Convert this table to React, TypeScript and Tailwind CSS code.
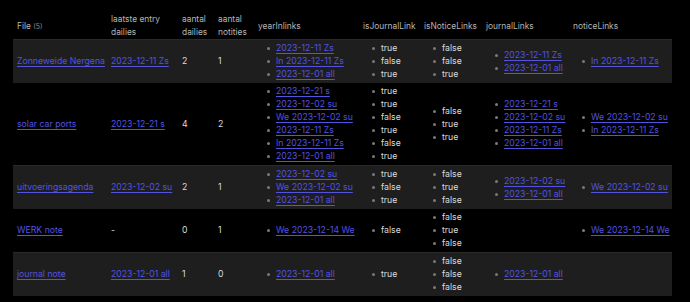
const rows = [
  {
    file: "Zonneweide Nergena",
    last: "2023-12-11 Zs",
    dailies: "2",
    notities: "1",
    year: ["2023-12-11 Zs", "In 2023-12-11 Zs", "2023-12-01 all"],
    isJournal: ["true", "false", "true"],
    isNotice: ["false", "false", "true"],
    journal: ["2023-12-11 Zs", "2023-12-01 all"],
    notice: ["In 2023-12-11 Zs"],
  },
  {
    file: "solar car ports",
    last: "2023-12-21 s",
    dailies: "4",
    notities: "2",
    year: ["2023-12-21 s", "2023-12-02 su", "We 2023-12-02 su", "2023-12-11 Zs", "In 2023-12-11 Zs", "2023-12-01 all"],
    isJournal: ["true", "true", "false", "true", "false", "true"],
    isNotice: ["false", "true", "true"],
    journal: ["2023-12-21 s", "2023-12-02 su", "2023-12-11 Zs", "2023-12-01 all"],
    notice: ["We 2023-12-02 su", "In 2023-12-11 Zs"],
  },
  {
    file: "uitvoeringsagenda",
    last: "2023-12-02 su",
    dailies: "2",
    notities: "1",
    year: ["2023-12-02 su", "We 2023-12-02 su", "2023-12-01 all"],
    isJournal: ["true", "false", "true"],
    isNotice: ["false", "true", "false"],
    journal: ["2023-12-02 su", "2023-12-01 all"],
    notice: ["We 2023-12-02 su"],
  },
  {
    file: "WERK note",
    last: null,
    dailies: "0",
    notities: "1",
    year: ["We 2023-12-14 We"],
    isJournal: ["false"],
    isNotice: ["false", "true", "false"],
    journal: [],
    notice: ["We 2023-12-14 We"],
  },
  {
    file: "journal note",
    last: "2023-12-01 all",
    dailies: "1",
    notities: "0",
    year: ["2023-12-01 all"],
    isJournal: ["true"],
    isNotice: ["false", "false", "false"],
    journal: ["2023-12-01 all"],
    notice: [],
  },
]

const Link = ({ children }: { children: string }) => (
  <a className="text-[#5353e2] underline underline-offset-[1.5px] decoration-[#5353e2] whitespace-nowrap">{children}</a>
)

const List = ({ items, links }: { items: string[]; links?: boolean }) => (
  <ul className="pl-[13px]">
    {items.map((it, i) => (
      <li key={i} className="flex items-center gap-[6px] whitespace-nowrap">
        <span className="w-[3px] h-[3px] rounded-full bg-[#7a7a7a] shrink-0" />
        {links ? <Link>{it}</Link> : <span>{it}</span>}
      </li>
    ))}
  </ul>
)

const App = () => {
  return (
    <div className="w-[690px] h-[302px] bg-black pl-[13px] pt-[13px] overflow-hidden" style={{ fontFamily: "Inter, 'Noto Sans', sans-serif" }}>
      <table className="w-[659px] table-fixed border-collapse text-[8.7px] leading-[13px] text-[#dcdcdc]">
        <colgroup>
          <col className="w-[94px]" />
          <col className="w-[71px]" />
          <col className="w-[36px]" />
          <col className="w-[40px]" />
          <col className="w-[105px]" />
          <col className="w-[61px]" />
          <col className="w-[62px]" />
          <col className="w-[87px]" />
          <col />
        </colgroup>
        <thead>
          <tr className="text-[#b5b5b5] text-left align-middle text-[8.4px]">
            <th className="font-normal px-[4px] pb-0">
              File <span className="text-[7px] text-[#8a8a8a]">(5)</span>
            </th>
            <th className="font-normal px-[4px]">laatste entry<br />dailies</th>
            <th className="font-normal px-[4px]">aantal<br />dailies</th>
            <th className="font-normal px-[4px]">aantal<br />notities</th>
            <th className="font-normal px-[4px]">yearInlinks</th>
            <th className="font-normal px-[4px]">isJournalLink</th>
            <th className="font-normal px-[4px]">isNoticeLinks</th>
            <th className="font-normal px-[4px]">journalLinks</th>
            <th className="font-normal px-[4px]">noticeLinks</th>
          </tr>
        </thead>
        <tbody>
          {rows.map((r, i) => (
            <tr key={i} className={i % 2 === 0 ? "bg-[#1e1e1e] border-t border-[#2a2a2a]" : "bg-black"}>
              <td className="px-[4px] py-[2px] align-middle whitespace-nowrap"><Link>{r.file}</Link></td>
              <td className="px-[4px] py-[2px] align-middle">{r.last ? <Link>{r.last}</Link> : "-"}</td>
              <td className="px-[4px] py-[2px] align-middle">{r.dailies}</td>
              <td className="px-[4px] py-[2px] align-middle">{r.notities}</td>
              <td className="py-[2px] align-middle"><List items={r.year} links /></td>
              <td className="py-[2px] align-middle"><List items={r.isJournal} /></td>
              <td className="py-[2px] align-middle"><List items={r.isNotice} /></td>
              <td className="py-[2px] align-middle">{r.journal.length > 0 && <List items={r.journal} links />}</td>
              <td className="py-[2px] align-middle">{r.notice.length > 0 && <List items={r.notice} links />}</td>
            </tr>
          ))}
        </tbody>
      </table>
    </div>
  )
}

export default App
